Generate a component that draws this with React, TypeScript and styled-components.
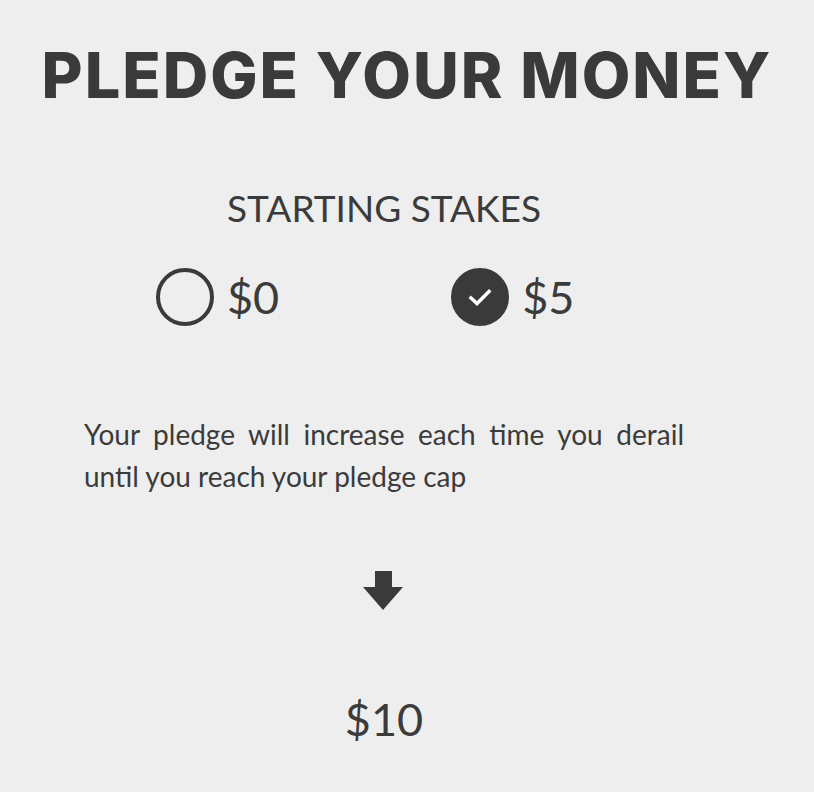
import React from "react";
import styled, { createGlobalStyle } from "styled-components";

const Global = createGlobalStyle`
  html, body { margin: 0; padding: 0; background: #eeeeee; }
  body { font-family: Lato, "Liberation Sans", sans-serif; color: #3b3b3b; }
`;

const Page = styled.main`
  width: 814px;
  min-height: 792px;
  display: flex;
  flex-direction: column;
  align-items: stretch;
  box-sizing: border-box;
  padding-top: 38px;
`;

const Title = styled.h1`
  margin: 0;
  text-align: center;
  font-family: Inter, "Liberation Sans", sans-serif;
  font-weight: 800;
  font-size: 63px;
  line-height: 74px;
  letter-spacing: 2px;
  color: #3a3a3a;
`;

const Column = styled.section`
  width: 600px;
  margin-left: 84px;
  display: flex;
  flex-direction: column;
`;

const Subtitle = styled.h2`
  margin: 74px 0 0;
  text-align: center;
  font-weight: 400;
  font-size: 37px;
  line-height: 44px;
  color: #3b3b3b;
`;

const Options = styled.div`
  display: flex;
  align-items: center;
  gap: 172px;
  padding-left: 72px;
  margin-top: 37px;
`;

const Option = styled.label`
  display: flex;
  align-items: center;
  gap: 13px;
  cursor: pointer;
`;

const Radio = styled.span<{ $checked?: boolean }>`
  width: 58px;
  height: 58px;
  box-sizing: border-box;
  border-radius: 50%;
  border: 4px solid #3a3a3a;
  background: ${(p) => (p.$checked ? "#3a3a3a" : "transparent")};
  display: flex;
  align-items: center;
  justify-content: center;
`;

const Amount = styled.span`
  font-size: 45px;
  line-height: 60px;
  color: #3b3b3b;
`;

const Note = styled.p`
  margin: 86px 0 0;
  font-size: 28px;
  line-height: 42px;
  text-align: justify;
  color: #3b3b3b;
`;

const ArrowWrap = styled.div`
  display: flex;
  justify-content: center;
  margin-top: 74px;
  margin-left: -2px;
`;

const Total = styled.div`
  margin-top: 78px;
  text-align: center;
  font-size: 45px;
  line-height: 60px;
  color: #3b3b3b;
`;

const Check = () => (
  <svg width="24" height="18" viewBox="0 0 24 18">
    <path d="M3 10 L9 15.5 L21 3.5" fill="none" stroke="#fff" strokeWidth="3.5" strokeLinecap="square" />
  </svg>
);

const DownArrow = () => (
  <svg width="40" height="40" viewBox="0 0 40 40">
    <path d="M12 0 H29 V16 H40 L20 39 L0 16 H12 Z" fill="#3a3a3a" />
  </svg>
);

export default function App() {
  return (
    <>
      <Global />
      <Page>
        <Title>PLEDGE YOUR MONEY</Title>
        <Column>
          <Subtitle>STARTING STAKES</Subtitle>
          <Options>
            <Option>
              <Radio />
              <Amount>$0</Amount>
            </Option>
            <Option>
              <Radio $checked>
                <Check />
              </Radio>
              <Amount>$5</Amount>
            </Option>
          </Options>
          <Note>
            Your pledge will increase each time you derail until you reach your pledge cap
          </Note>
          <ArrowWrap>
            <DownArrow />
          </ArrowWrap>
          <Total>$10</Total>
        </Column>
      </Page>
    </>
  );
}
